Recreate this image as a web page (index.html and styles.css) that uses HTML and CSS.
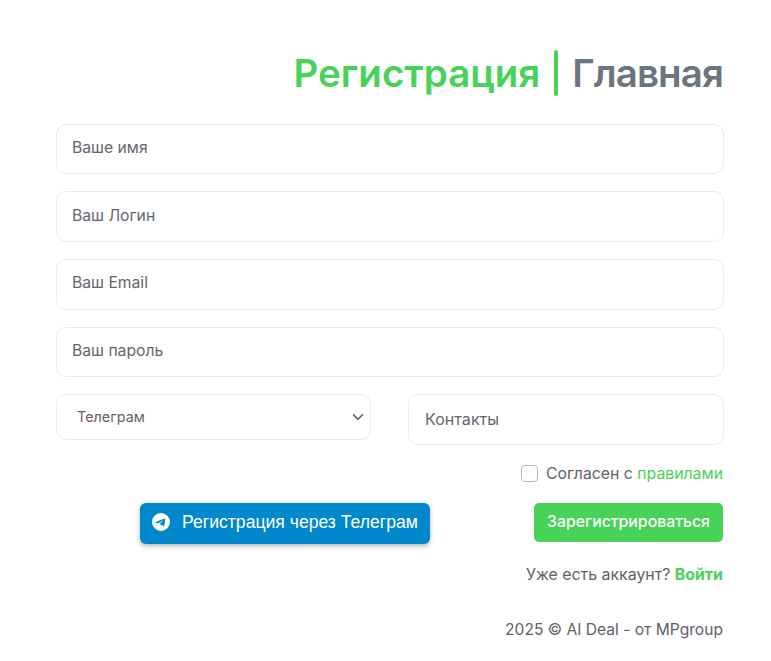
FILE: index.html
```html
<!DOCTYPE html>
<html lang="ru">
<head>
<meta charset="utf-8">
<title>Регистрация</title>
<link rel="stylesheet" href="styles.css">
</head>
<body>
<main class="page">
  <h1 class="title"><span class="title-active">Регистрация</span><span class="title-sep"></span><a class="title-link" href="#">Главная</a></h1>
  <form class="form">
    <input class="field" type="text" placeholder="Ваше имя">
    <input class="field" type="text" placeholder="Ваш Логин">
    <input class="field" type="email" placeholder="Ваш Email">
    <input class="field" type="password" placeholder="Ваш пароль">
    <div class="pair">
      <select class="select"><option>Телеграм</option></select>
      <input class="field" type="text" placeholder="Контакты">
    </div>
    <label class="agree"><input class="check" type="checkbox"><span>Согласен с <a class="green" href="#">правилами</a></span></label>
    <div class="actions">
      <button class="tg" type="button">
        <svg class="tg-icon" viewBox="0 0 16 16" aria-hidden="true"><path fill="#fff" d="M16 8A8 8 0 1 1 0 8a8 8 0 0 1 16 0zM8.29 5.9c-.78.32-2.33.99-4.66 2-.38.15-.58.3-.6.44-.03.25.27.34.69.47l.17.06c.41.13.96.29 1.25.3.26 0 .55-.1.87-.32 2.18-1.47 3.3-2.21 3.37-2.23.05-.01.12-.03.17.02.05.04.04.12.04.14-.03.13-1.24 1.25-1.87 1.84l-.18.17c-.44.41-.89.7-.09 1.22.67.44 1.06.73 1.75 1.18.44.28.78.62 1.24.58.21-.02.43-.22.54-.8.26-1.37.76-4.35.88-5.58 0-.1 0-.23-.02-.29a.3.3 0 0 0-.1-.2.37.37 0 0 0-.22-.07c-.21 0-.53.11-2.07.75z"/></svg>
        <span>Регистрация через Телеграм</span>
      </button>
      <button class="submit" type="submit">Зарегистрироваться</button>
    </div>
    <p class="line">Уже есть аккаунт? <a class="green strong" href="#">Войти</a></p>
    <p class="line copy">2025 © AI Deal - от MPgroup</p>
  </form>
</main>
</body>
</html>
```
FILE: styles.css
```css
* { box-sizing: border-box; }
html, body { margin: 0; background: #fff; }
body { font-family: "Inter", "Noto Sans", sans-serif; color: #5f6168; font-size: 16px; }
.page { width: 771px; height: 661px; overflow: hidden; padding: 48px 47px 0 56px; }
.title { margin: 0; height: 50px; padding-right: 1px; display: flex; justify-content: flex-end; align-items: center; font-size: 38.5px; line-height: 50px; font-weight: 600; }
.title-active { color: #48d358; letter-spacing: 0; }
.title-sep { width: 4px; height: 46px; margin: 0 14px; border-radius: 2px; background: #48d358; }
.title-link { color: #6c757d; text-decoration: none; letter-spacing: -0.9px; }
.form { display: flex; flex-direction: column; margin-top: 25.5px; }
.field { display: block; width: 100%; height: 50.5px; margin-bottom: 17.25px; padding: 0 15px 3px; border: 1px solid #e9ebee; border-radius: 10px; background: #fff; font: 400 15.7px "Inter", sans-serif; color: #5f6168; outline: none; }
.field::placeholder { color: #65666b; opacity: 1; }
.pair { display: grid; grid-template-columns: 315px 316px; justify-content: space-between; align-items: start; margin-top: -1px; }
.pair .field { margin-bottom: 0; height: 51px; padding: 0 16px 1px; font-size: 16.1px; }
.select { height: 46px; width: 100%; padding: 0 32px 0 20px; border: 1px solid #e9ebee; border-radius: 10px; appearance: none; background: #fff url("data:image/svg+xml,%3Csvg xmlns='http://www.w3.org/2000/svg' viewBox='0 0 16 16'%3E%3Cpath fill='none' stroke='%23555' stroke-linecap='round' stroke-linejoin='round' stroke-width='2' d='m2 5 6 6 6-6'/%3E%3C/svg%3E") no-repeat right 4px center / 16px 12px; font: 400 14.4px "Inter", sans-serif; color: #6b5f5a; outline: none; }
.agree { display: flex; justify-content: flex-end; align-items: center; gap: 8px; margin-top: 19px; padding-right: 1px; height: 20px; font-size: 15.8px; color: #5f6168; }
.check { width: 17px; height: 17px; margin: 0; appearance: none; border: 1px solid #b4b8c2; border-radius: 4px; background: #fff; }
.green { color: #48d358; text-decoration: none; }
.strong { font-weight: 700; }
.actions { display: flex; justify-content: space-between; align-items: flex-start; margin-top: 19px; padding: 0 1px 0 84px; }
.tg { display: flex; align-items: center; gap: 12px; width: 290px; height: 41px; padding: 0 12px 2px; border: 0; border-radius: 6px; background: #0088cc; color: #fff; font: 400 17.6px "Liberation Sans", Arial, sans-serif; white-space: nowrap; box-shadow: 0 2px 5px rgba(0,0,0,.3); }
.tg-icon { width: 18px; height: 18px; flex: none; }
.submit { width: 189px; height: 39px; border: 0; border-radius: 5px; background: #48d358; color: #fff; font: 500 15.8px "Inter", sans-serif; white-space: nowrap; padding: 0 0 2px; }
.line { margin: 21px 0 0; padding-right: 1px; height: 20px; line-height: 20px; text-align: right; font-size: 15.9px; }
.copy { margin-top: 35px; font-size: 15.6px; }
```
